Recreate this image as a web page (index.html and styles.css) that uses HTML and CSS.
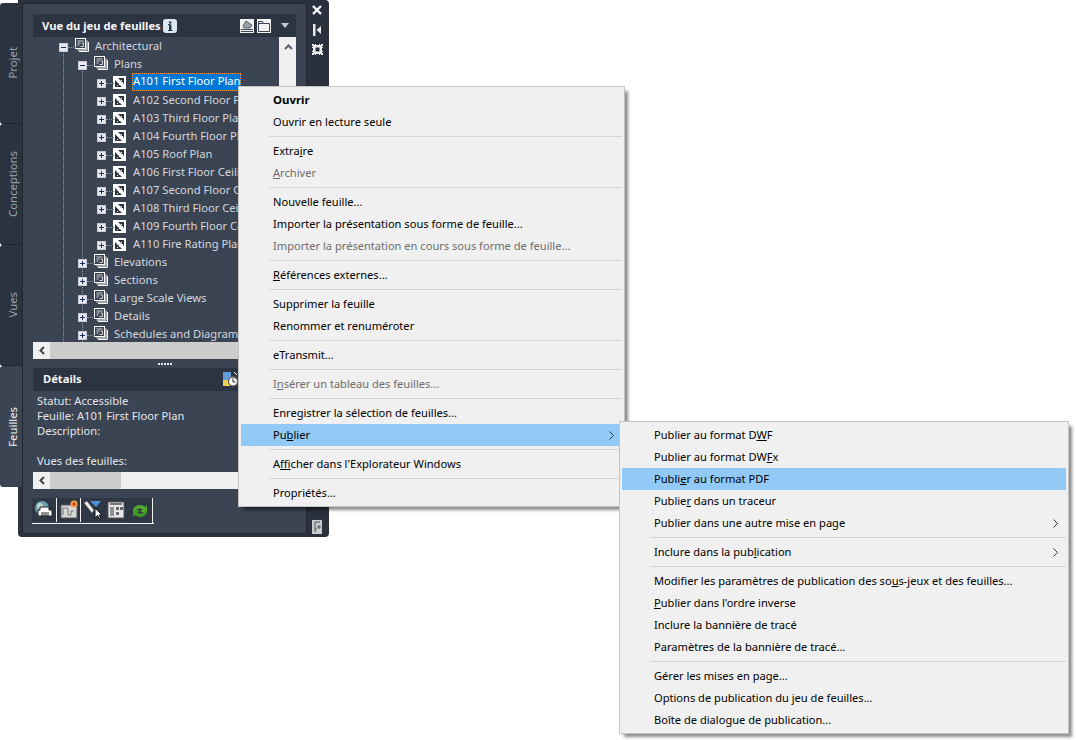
FILE: index.html
```html
<!DOCTYPE html>
<html lang="fr">
<head>
<meta charset="utf-8">
<title>Vue du jeu de feuilles</title>
<link rel="stylesheet" href="styles.css">
</head>
<body>
<svg class="defs" width="0" height="0">
  <defs>
    <symbol id="set" viewBox="0 0 14 14">
      <path d="M4 13.500H13.500V4M2.500 12H12V2.500" fill="none" stroke="#fff"/>
      <rect x=".5" y=".5" width="10" height="10" fill="#3b4453" stroke="#fff"/>
      <path d="M2.500 3h6M2.500 5h3M6.500 5h2v3.500h-3M2.500 7h2" stroke="#cfd3d8" fill="none"/>
    </symbol>
    <symbol id="sheet" viewBox="0 0 13 13">
      <rect width="13" height="13" fill="#fff"/>
      <path d="M2 4v7h7zM5 2h6v6z" fill="#2d3441"/>
      <path d="M8 4h1v1H8zM6 8h1v1H6zM4 9h1v1H4zM9 6h1v1H9z" fill="#fff"/>
    </symbol>
    <symbol id="plus" viewBox="0 0 9 9">
      <rect width="9" height="9" fill="#c9ccd6"/>
      <rect x="1" y="1" width="7" height="7" fill="#e9eaf0"/>
      <path d="M2 4.500h5M4.500 2v5" stroke="#1c2a5e"/>
    </symbol>
    <symbol id="minus" viewBox="0 0 9 9">
      <rect width="9" height="9" fill="#c9ccd6"/>
      <rect x="1" y="1" width="7" height="7" fill="#e9eaf0"/>
      <path d="M2 4.500h5" stroke="#1c2a5e"/>
    </symbol>
    <symbol id="chev" viewBox="0 0 5 9">
      <path d="M.5.5l4 4-4 4" fill="none" stroke="#333"/>
    </symbol>
  </defs>
</svg>

<main class="stage">
  <section class="palette">
    <nav class="tabs">
      <div class="tab"><span class="tab-label">Projet</span></div>
      <div class="tab"><span class="tab-label">Conceptions</span></div>
      <div class="tab"><span class="tab-label">Vues</span></div>
      <div class="tab tab-active"><span class="tab-label">Feuilles</span></div>
    </nav>

    <div class="content">
      <header class="head">
        <span class="head-title">Vue du jeu de feuilles</span>
        <svg class="info" width="14" height="14" viewBox="0 0 14 14"><rect width="14" height="14" rx="3" fill="#dbe7f5"/><rect x="6" y="5.500" width="2.400" height="6" fill="#2d3441"/><rect x="6" y="2.500" width="2.400" height="2" fill="#2d3441"/><path d="M5 5.500h2M5 11.500h4.500" stroke="#2d3441"/></svg>
        <span class="grow"></span>
        <svg class="h-ico" width="14" height="14" viewBox="0 0 14 14"><rect width="14" height="14" fill="#f2f2f2"/><path d="M3 7l3-5 6 4-2 3H4z" fill="#9aa0a8" stroke="#3b4453" stroke-width=".8"/><path d="M1 10.500h12M1 12.500h12" stroke="#3b4453"/></svg>
        <svg class="h-ico" width="14" height="14" viewBox="0 0 14 14"><rect width="14" height="14" fill="#f2f2f2"/><path d="M1.500 12.500v-10h4l1 2h6v8zM1.500 4.500h5" fill="#f2f2f2" stroke="#3b4453"/></svg>
        <svg class="h-drop" width="8" height="5" viewBox="0 0 8 5"><path d="M0 0h8L4 5z" fill="#c6cbd2"/></svg>
      </header>

      <div class="tree-wrap">
        <div class="tree">
          <i class="guide g1"></i><i class="guide g2"></i>
          <div class="row lv0"><svg class="box"><use href="#minus"/></svg><i class="dash"></i><svg class="set"><use href="#set"/></svg><span>Architectural</span></div>
          <div class="row lv1"><svg class="box"><use href="#minus"/></svg><i class="dash"></i><svg class="set"><use href="#set"/></svg><span>Plans</span></div>
          <div class="row lv2"><svg class="box"><use href="#plus"/></svg><i class="dash"></i><svg class="sheet"><use href="#sheet"/></svg><span class="selected">A101 First Floor Plan</span></div>
          <div class="row lv2"><svg class="box"><use href="#plus"/></svg><i class="dash"></i><svg class="sheet"><use href="#sheet"/></svg><span>A102 Second Floor Plan</span></div>
          <div class="row lv2"><svg class="box"><use href="#plus"/></svg><i class="dash"></i><svg class="sheet"><use href="#sheet"/></svg><span>A103 Third Floor Plan</span></div>
          <div class="row lv2"><svg class="box"><use href="#plus"/></svg><i class="dash"></i><svg class="sheet"><use href="#sheet"/></svg><span>A104 Fourth Floor Plan</span></div>
          <div class="row lv2"><svg class="box"><use href="#plus"/></svg><i class="dash"></i><svg class="sheet"><use href="#sheet"/></svg><span>A105 Roof Plan</span></div>
          <div class="row lv2"><svg class="box"><use href="#plus"/></svg><i class="dash"></i><svg class="sheet"><use href="#sheet"/></svg><span>A106 First Floor Ceiling Plan</span></div>
          <div class="row lv2"><svg class="box"><use href="#plus"/></svg><i class="dash"></i><svg class="sheet"><use href="#sheet"/></svg><span>A107 Second Floor Ceiling Plan</span></div>
          <div class="row lv2"><svg class="box"><use href="#plus"/></svg><i class="dash"></i><svg class="sheet"><use href="#sheet"/></svg><span>A108 Third Floor Ceiling Plan</span></div>
          <div class="row lv2"><svg class="box"><use href="#plus"/></svg><i class="dash"></i><svg class="sheet"><use href="#sheet"/></svg><span>A109 Fourth Floor Ceiling Plan</span></div>
          <div class="row lv2"><svg class="box"><use href="#plus"/></svg><i class="dash"></i><svg class="sheet"><use href="#sheet"/></svg><span>A110 Fire Rating Plan</span></div>
          <div class="row lv1"><svg class="box"><use href="#plus"/></svg><i class="dash"></i><svg class="set"><use href="#set"/></svg><span>Elevations</span></div>
          <div class="row lv1"><svg class="box"><use href="#plus"/></svg><i class="dash"></i><svg class="set"><use href="#set"/></svg><span>Sections</span></div>
          <div class="row lv1"><svg class="box"><use href="#plus"/></svg><i class="dash"></i><svg class="set"><use href="#set"/></svg><span>Large Scale Views</span></div>
          <div class="row lv1"><svg class="box"><use href="#plus"/></svg><i class="dash"></i><svg class="set"><use href="#set"/></svg><span>Details</span></div>
          <div class="row lv1"><svg class="box"><use href="#plus"/></svg><i class="dash"></i><svg class="set"><use href="#set"/></svg><span>Schedules and Diagrams</span></div>
        </div>
        <div class="vscroll">
          <svg width="9" height="6" viewBox="0 0 9 6"><path d="M1 5l3.500-3.500L8 5" fill="none" stroke="#5a606b" stroke-width="2"/></svg>
        </div>
      </div>
      <div class="hscroll">
        <span class="hs-arrow"><svg width="6" height="9" viewBox="0 0 6 9"><path d="M5 1L1.500 4.500 5 8" fill="none" stroke="#444" stroke-width="2"/></svg></span>
        <span class="hs-thumb hs-wide"></span>
      </div>

      <div class="splitter"><i></i><i></i><i></i><i></i><i></i></div>

      <header class="head head-details">
        <span class="head-title">Détails</span>
        <span class="grow"></span>
        <svg class="d-ico" width="15" height="15" viewBox="0 0 15 15"><rect x="0" y="0" width="8" height="8" fill="#5f9bd6"/><rect x="0" y="8" width="7" height="6" fill="#f2d14e"/><circle cx="10" cy="9.500" r="5" fill="#fff"/><path d="M10 6.500v3.500h2.500" stroke="#222" fill="none"/><circle cx="10" cy="9.500" r="4.500" fill="none" stroke="#222"/><path d="M11 0l3 3" stroke="#fff"/></svg>
      </header>
      <div class="details">
        <div>Statut: Accessible</div>
        <div>Feuille: A101 First Floor Plan</div>
        <div>Description:</div>
        <div class="blank">&nbsp;</div>
        <div>Vues des feuilles:</div>
      </div>
      <div class="hscroll hscroll-b">
        <span class="hs-arrow"><svg width="6" height="9" viewBox="0 0 6 9"><path d="M5 1L1.500 4.500 5 8" fill="none" stroke="#444" stroke-width="2"/></svg></span>
        <span class="hs-thumb hs-short"></span>
      </div>

      <div class="toolbar">
        <span class="tool"><svg width="20" height="20" viewBox="0 0 20 20"><circle cx="8" cy="8" r="7" fill="#6f9fb0"/><circle cx="6" cy="6" r="3" fill="#b8d6c8"/><path d="M6 7h9v3h3v6H4v-6h2z" fill="#fff" stroke="#222"/><path d="M7 13h8M7 15h8" stroke="#222"/></svg></span>
        <span class="tool tool-sep"><svg width="20" height="20" viewBox="0 0 20 20"><rect x="2" y="5" width="16" height="13" fill="#d8d8d8" stroke="#555"/><path d="M4 15V8h5v7h3v-4h3" fill="none" stroke="#777"/><circle cx="15" cy="4" r="3.500" fill="#f0a040"/><circle cx="15" cy="4" r="1.500" fill="#d03020"/></svg></span>
        <span class="tool tool-sep"><svg width="20" height="20" viewBox="0 0 20 20"><path d="M1 3l3-2 7 9-2 3z" fill="#e8e8e8" stroke="#555" stroke-width=".5"/><path d="M7 1h11l-5 6z" fill="#4f8fdc"/><path d="M12 8v10l2.500-2.500 1.500 3.500 1.500-.7-1.500-3.300H19z" fill="#fff" stroke="#111"/></svg></span>
        <span class="tool"><svg width="20" height="20" viewBox="0 0 20 20"><rect x="2" y="2" width="16" height="16" fill="#e8e8e8" stroke="#555"/><rect x="4" y="3" width="12" height="2" fill="#777"/><rect x="4" y="7" width="4" height="9" fill="#8a8f96"/><rect x="10" y="7" width="3" height="3" fill="#666"/><rect x="14" y="7" width="3" height="3" fill="#666"/><rect x="10" y="12" width="3" height="3" fill="#666"/></svg></span>
        <span class="tool tool-last"><svg width="20" height="20" viewBox="0 0 20 20"><path d="M3 9a7 6 0 0 1 12-3l2-2v7h-7l2.500-2.500A4 4 0 0 0 6 10z" fill="#4fa82c"/><path d="M17 11a7 6 0 0 1-12 3l-2 2v-7h7l-2.500 2.500A4 4 0 0 0 14 10z" fill="#3e9a22"/></svg></span>
      </div>
    </div>

    <aside class="strip">
      <svg width="12" height="12" viewBox="0 0 12 12"><path d="M2 2l8 8M10 2l-8 8" stroke="#fff" stroke-width="2.400"/></svg>
      <svg class="pin" width="10" height="12" viewBox="0 0 10 12"><path d="M1 0h2.500v12H1zM9 2v8L4.500 6z" fill="#e8e8e8"/></svg>
      <svg class="gear" width="13" height="13" viewBox="0 0 13 13"><path d="M1 1h2v1h1V1h1v1h3V1h1v1h1V1h2v2h-1v1h1v1h-1v3h1v1h-1v1h1v2h-2v-1H9v1H8v-1H5v1H4v-1H3v1H1v-2h1V9H1V8h1V5H1V4h1V3H1z" fill="#f0f0f0"/><rect x="4.500" y="4.500" width="4" height="4" fill="#2d3441"/></svg>
      <span class="grow"></span>
      <svg class="strip-b" width="10" height="14" viewBox="0 0 10 14"><rect width="10" height="14" fill="#c8cbd0"/><path d="M3 2h5M3 2v10M6 6h2v2H6zM3 9h2" stroke="#555" fill="none"/></svg>
    </aside>
  </section>

  <ul class="menu menu-main">
    <li class="item strong">Ouvrir</li>
    <li class="item">Ouvrir en lecture seule</li>
    <li class="sep"></li>
    <li class="item">Extra<u>i</u>re</li>
    <li class="item off"><u>A</u>rchiver</li>
    <li class="sep"></li>
    <li class="item">Nouvelle feuille...</li>
    <li class="item">Importer la présentation sous forme de feuille...</li>
    <li class="item off">Importer la présentation en cours sous forme de feuille...</li>
    <li class="sep"></li>
    <li class="item"><u>R</u>éférences externes...</li>
    <li class="sep"></li>
    <li class="item">Supprimer la feuille</li>
    <li class="item">Renommer et renuméroter</li>
    <li class="sep"></li>
    <li class="item">eTransmit...</li>
    <li class="sep"></li>
    <li class="item off">I<u>n</u>sérer un tableau des feuilles...</li>
    <li class="sep"></li>
    <li class="item">Enregistrer la sélection de feuilles...</li>
    <li class="item sub hot"><span>Pu<u>b</u>lier</span><svg class="arrow"><use href="#chev"/></svg></li>
    <li class="sep"></li>
    <li class="item">A<u>f</u>ficher dans l'Explorateur Windows</li>
    <li class="sep"></li>
    <li class="item">Propriétés...</li>
  </ul>

  <ul class="menu menu-sub">
    <li class="item">Publier au format D<u>W</u>F</li>
    <li class="item">Publier au format DW<u>F</u>x</li>
    <li class="item hot">Publi<u>e</u>r au format PDF</li>
    <li class="item">Publie<u>r</u> dans un traceur</li>
    <li class="item sub"><span>Publier dans une autre mise en page</span><svg class="arrow"><use href="#chev"/></svg></li>
    <li class="sep"></li>
    <li class="item sub"><span>Inclure dans la pub<u>l</u>ication</span><svg class="arrow"><use href="#chev"/></svg></li>
    <li class="sep"></li>
    <li class="item">Modifier les paramètres de publication des so<u>u</u>s-jeux et des feuilles...</li>
    <li class="item"><u>P</u>ublier dans l'ordre inverse</li>
    <li class="item">Inclure la bannière de tracé</li>
    <li class="item">Paramètres de la bannière de tracé...</li>
    <li class="sep"></li>
    <li class="item">Gérer les mises en page...</li>
    <li class="item">Options de publication du jeu de feuilles...</li>
    <li class="item">Boîte de dialogue de publication...</li>
  </ul>
</main>
</body>
</html>
```
FILE: styles.css
```css
* { box-sizing: border-box; }
html, body { margin: 0; padding: 0; background: #fff; }
body { width: 1076px; height: 740px; overflow: hidden; font: 11.2px/15px "Noto Sans", "Open Sans", sans-serif; }
.defs { position: absolute; }
.stage { position: relative; width: 1076px; height: 740px; }
.grow { flex: 1; }

/* palette window */
.palette {
  position: absolute; left: 0; top: 0; width: 329px; height: 537px;
  display: flex;
}
.palette::before {
  content: ""; position: absolute; left: 18px; top: 0; right: 0; bottom: 0;
  background: #2a303c; border-radius: 0 4px 4px 4px;
}
.tabs {
  position: relative; width: 22px; height: 485px; margin-top: 3px;
  display: flex; flex-direction: column;
}
.tab {
  height: 121px; background: #2c3340; border-bottom: 1px solid #1f242d;
  border-radius: 3px 0 0 3px; display: flex; align-items: center; justify-content: center;
  color: #9aa3af;
}
.tab-active { background: #3b4453; color: #f0f2f4; border-bottom: 0; }
.tab-label { writing-mode: vertical-rl; transform: rotate(180deg); font-size: 11.3px; margin-left: 2px; }

.content {
  position: relative; width: 285px; height: 531px; margin-top: 3px;
  background: #3b4453; border: 1px solid #20252e; border-radius: 3px;
  padding: 10px 10px 0 10px;
  display: flex; flex-direction: column;
}
.head {
  height: 23px; flex: none; background: #2d3441; color: #f4f6f8;
  display: flex; align-items: center; padding-left: 9px;
}
.head-title { font-weight: 700; font-size: 11.2px; margin-bottom: 1px; }
.head-details .head-title { margin: 0 0 3px 1px; }
.info { margin-left: 2px; }
.h-ico { margin-left: 3px; }
.h-drop { margin: 0 7px 0 10px; }
.tree-wrap { height: 305px; flex: none; display: flex; overflow: hidden; }
.tree { position: relative; width: 246px; flex: none; color: #d3d8de; overflow: hidden; }
.guide { position: absolute; width: 0; border-left: 1px dotted #8d95a1; }
.g1 { left: 30px; top: 14px; bottom: 0; }
.g2 { left: 49px; top: 32px; bottom: 0; }
.row { position: relative; height: 18px; display: flex; align-items: center; white-space: nowrap; }
.row > span { margin-bottom: 2px; }
.lv0 { padding-left: 26px; }
.lv1 { padding-left: 45px; }
.lv2 { padding-left: 64px; }
.box { width: 9px; height: 9px; flex: none; position: relative; top: 1px; }
.dash { width: 8px; height: 0; border-top: 1px dotted #8d95a1; flex: none; position: relative; top: 1px; }
.set { width: 14px; height: 14px; flex: none; margin: -2px 6px 0 -1px; }
.sheet { width: 13px; height: 13px; flex: none; margin: 0 7px 0 -1px; }
.row > .selected { background: #0078d7; color: #fff; outline: 1px dotted #ff9a2e; outline-offset: -1px; padding: 0 1px; margin: 0 0 0 -1px; height: 18px; line-height: 16px; }
.vscroll { width: 18px; flex: none; background: #f0f0f0; display: flex; justify-content: center; padding-top: 7px; }
.hscroll { height: 17px; flex: none; display: flex; background: #f0f0f0; }
.hs-arrow { width: 17px; display: flex; align-items: center; justify-content: center; }
.hs-thumb { background: #cdcdcd; display: block; }
.hs-wide { width: 220px; }
.hs-short { width: 71px; }
.splitter { height: 9px; flex: none; display: flex; justify-content: center; align-items: center; gap: 1px; }
.splitter i { width: 2px; height: 2px; background: #e4e7ea; }
.d-ico { margin-right: 58px; }
.details { height: 81px; flex: none; padding: 2px 0 0 4px; color: #e3e6ea; }
.toolbar { display: flex; margin: 9px 0 0 -1px; height: 26px; width: 122px; border-bottom: 1px solid #f2f2f2; }
.tool { width: 24px; height: 24px; background: #2f3744; display: flex; align-items: center; justify-content: center; }
.tool-sep { border-left: 1px solid #f2f2f2; }
.tool-last { border-right: 1px solid #f2f2f2; height: 25px; width: 25px; }

.strip { position: relative; flex: 1; display: flex; flex-direction: column; align-items: center; padding: 4px 2px 3px 0; }
.pin { margin-top: 8px; }
.gear { margin-top: 7px; }

/* context menus */
.menu {
  position: absolute; margin: 0; padding: 2px; list-style: none;
  background: #f0f0f0; border: 1px solid #c4c4c4;
  box-shadow: 4px 4px 3px -1px rgba(0,0,0,.45);
  color: #000;
}
.menu-main { left: 238px; top: 86px; width: 387px; }
.menu-sub { left: 619px; top: 421px; width: 450px; }
.item {
  height: 22px; padding-left: 32px; padding-right: 8px;
  line-height: 22px; white-space: pre; font-size: 11.1px;
}
.item.sub { display: flex; align-items: center; justify-content: space-between; }
.item.strong { font-weight: 700; font-size: 11.4px; }
.item.off { color: #6d6d6d; }
.item.hot { background: #91c9f7; }
.sep { height: 7px; margin-left: 28px; position: relative; }
.sep::before { content: ""; position: absolute; left: 0; right: 0; top: 3px; height: 1px; background: #d4d4d4; }
.arrow { width: 5px; height: 9px; flex: none; }
```
